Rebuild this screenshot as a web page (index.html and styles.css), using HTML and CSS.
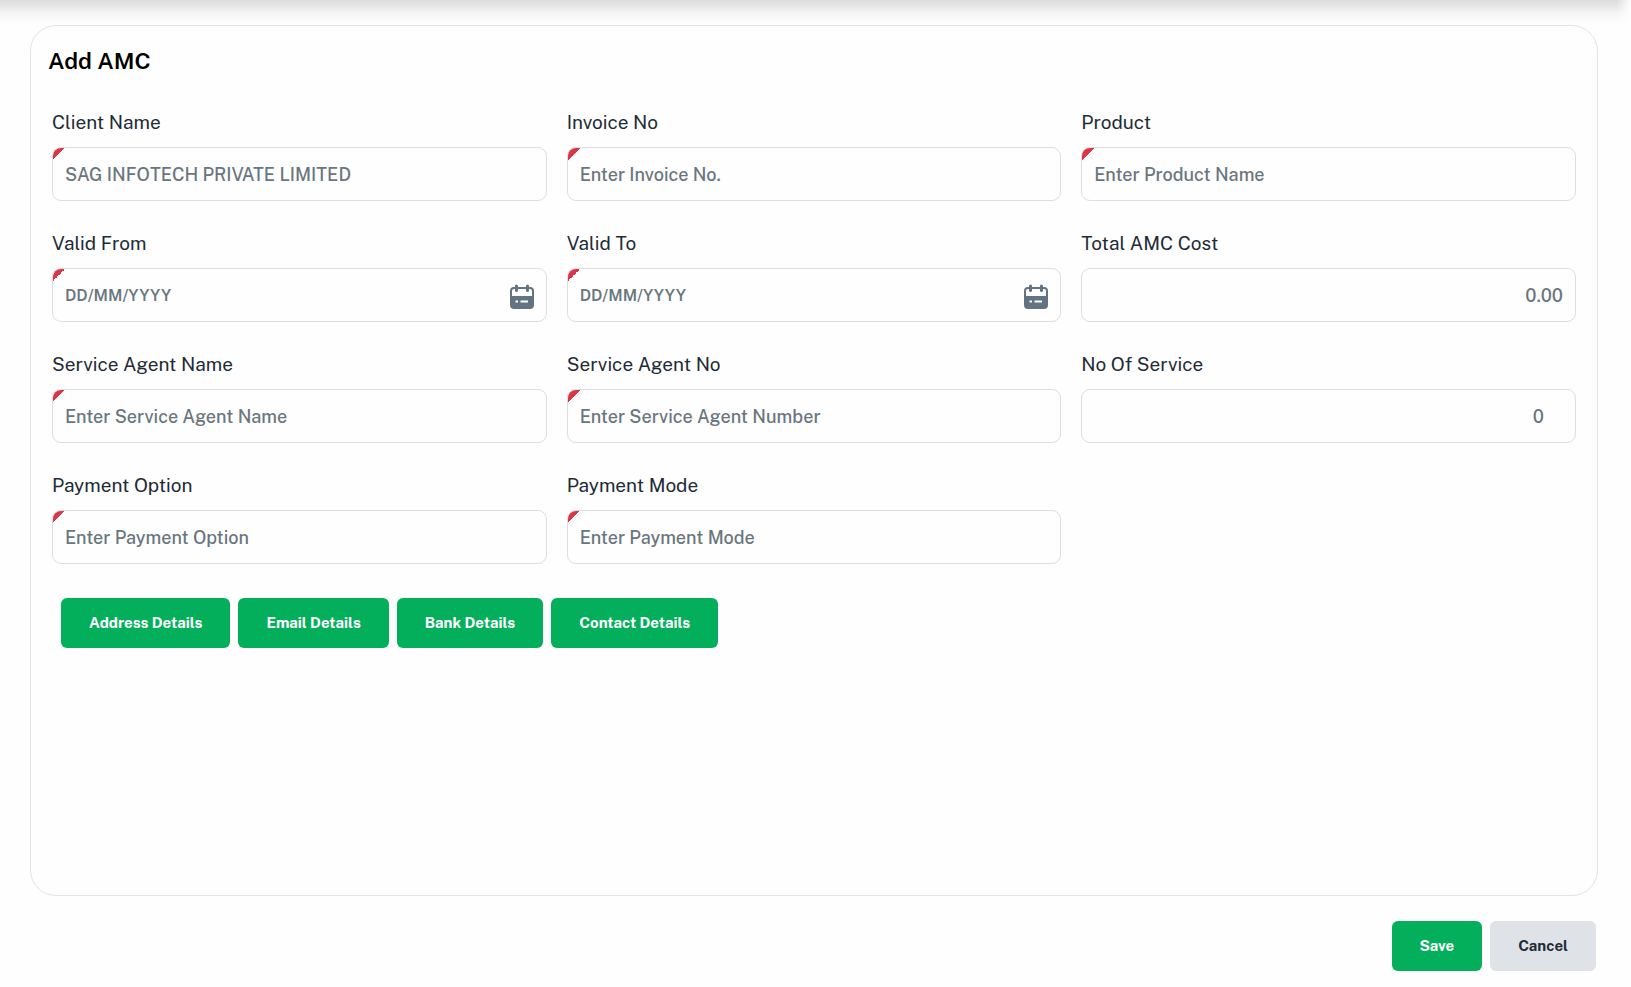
FILE: index.html
```html
<!DOCTYPE html>
<html lang="en">
<head>
<meta charset="utf-8">
<title>Add AMC</title>
<link rel="stylesheet" href="styles.css">
</head>
<body>
<svg class="sprite" aria-hidden="true">
  <symbol id="calendar" viewBox="0 0 24 26">
    <path fill-rule="evenodd" fill="currentColor" d="M4 3H20A4 4 0 0 1 24 7V21A4 4 0 0 1 20 25H4A4 4 0 0 1 0 21V7A4 4 0 0 1 4 3ZM4 5A2 2 0 0 0 2 7V12H22V7A2 2 0 0 0 20 5ZM5.500 16.500V18.500H8V16.500ZM10.500 16.500V18.500H18V16.500Z"/>
    <path fill="none" stroke="currentColor" stroke-width="3" stroke-linecap="round" d="M6.500 2V6.500M17.500 2V6.500"/>
  </symbol>
</svg>
<form class="page">
  <main class="card">
    <h1 class="title">Add AMC</h1>
    <div class="fields">
      <div class="field">
        <label class="label" for="client">Client Name</label>
        <div class="control required"><input class="input" id="client" type="text" value="SAG INFOTECH PRIVATE LIMITED"></div>
      </div>
      <div class="field">
        <label class="label" for="invoice">Invoice No</label>
        <div class="control required"><input class="input" id="invoice" type="text" placeholder="Enter Invoice No."></div>
      </div>
      <div class="field">
        <label class="label" for="product">Product</label>
        <div class="control required"><input class="input" id="product" type="text" placeholder="Enter Product Name"></div>
      </div>
      <div class="field">
        <label class="label" for="from">Valid From</label>
        <div class="control required">
          <input class="input date" id="from" type="text" placeholder="DD/MM/YYYY">
          <button class="picker" type="button" aria-label="Choose valid from date"><svg class="icon"><use href="#calendar"/></svg></button>
        </div>
      </div>
      <div class="field">
        <label class="label" for="to">Valid To</label>
        <div class="control required">
          <input class="input date" id="to" type="text" placeholder="DD/MM/YYYY">
          <button class="picker" type="button" aria-label="Choose valid to date"><svg class="icon"><use href="#calendar"/></svg></button>
        </div>
      </div>
      <div class="field">
        <label class="label" for="cost">Total AMC Cost</label>
        <div class="control"><input class="input amount" id="cost" type="text" placeholder="0.00"></div>
      </div>
      <div class="field">
        <label class="label" for="agent">Service Agent Name</label>
        <div class="control required"><input class="input" id="agent" type="text" placeholder="Enter Service Agent Name"></div>
      </div>
      <div class="field">
        <label class="label" for="agent-no">Service Agent No</label>
        <div class="control required"><input class="input" id="agent-no" type="text" placeholder="Enter Service Agent Number"></div>
      </div>
      <div class="field">
        <label class="label" for="services">No Of Service</label>
        <div class="control"><input class="input amount count" id="services" type="text" placeholder="0"></div>
      </div>
      <div class="field">
        <label class="label" for="option">Payment Option</label>
        <div class="control required"><input class="input" id="option" type="text" placeholder="Enter Payment Option"></div>
      </div>
      <div class="field">
        <label class="label" for="mode">Payment Mode</label>
        <div class="control required"><input class="input" id="mode" type="text" placeholder="Enter Payment Mode"></div>
      </div>
    </div>
    <div class="details">
      <button class="button" type="button">Address Details</button>
      <button class="button" type="button">Email Details</button>
      <button class="button" type="button">Bank Details</button>
      <button class="button" type="button">Contact Details</button>
    </div>
  </main>
  <footer class="actions">
    <button class="button" type="submit">Save</button>
    <button class="button cancel" type="button">Cancel</button>
  </footer>
</form>
</body>
</html>
```
FILE: styles.css
```css
* { box-sizing: border-box; }

body {
  margin: 0;
  background:
    linear-gradient(to left, #fefefe, transparent) top right / 14px 24px no-repeat,
    #fefefe linear-gradient(#dcdcdc, #e4e4e4 5px, #f5f5f5 13px, #fefefe 24px) top / 100% 24px no-repeat;
  color: #212b36;
  font-family: "Public Sans", Inter, "Liberation Sans", sans-serif;
}

.sprite { display: none; }

.page {
  display: flex;
  flex-direction: column;
  gap: 25px;
  min-height: 100vh;
  padding: 25px 33px 16px 30px;
}

.card {
  flex: 1;
  border: 1px solid #e2e3e5;
  border-radius: 26px;
  padding: 20px 21px;
  background: #fefefe;
}

.title {
  margin: 0 0 35px -4px;
  color: #000;
  font-size: 23px;
  font-weight: 600;
  line-height: 29px;
}

.fields {
  display: grid;
  grid-template-columns: repeat(3, minmax(0, 1fr));
  gap: 30px 20px;
}

.field {
  display: flex;
  flex-direction: column;
  gap: 12px;
}

.label {
  align-self: flex-start;
  font-size: 19px;
  line-height: 25px;
}

.control {
  position: relative;
  display: flex;
  align-items: center;
  height: 54px;
  border: 1px solid #dcdee0;
  border-radius: 9px;
  overflow: hidden;
}

.required::before {
  content: "";
  position: absolute;
  top: 0;
  left: 0;
  width: 12px;
  height: 12px;
  background: linear-gradient(135deg, #dc3545 50%, transparent 50%);
}

.input {
  flex: 1;
  min-width: 0;
  height: 100%;
  border: 0;
  padding: 0 12px;
  background: transparent;
  color: #69767e;
  font: 500 18px "Public Sans", Inter, "Liberation Sans", sans-serif;
  outline: 0;
}

.input::placeholder { color: #69767e; opacity: 1; }
.date { font-size: 16px; font-weight: 600; }
.amount { text-align: right; }
.count { padding-right: 31px; }

.picker {
  display: flex;
  border: 0;
  padding: 4px 12px 0;
  background: transparent;
  color: #637381;
}

.icon { width: 24px; height: 26px; }

.details {
  display: flex;
  gap: 8px;
  padding: 34px 9px 0;
}

.button {
  height: 50px;
  border: 0;
  border-radius: 6px;
  padding: 0 28px 2px;
  background: #04af5c;
  color: #fff;
  font: 700 15px "Public Sans", Inter, "Liberation Sans", sans-serif;
}

.cancel { background: #dfe3e8; color: #212b36; }

.actions {
  display: flex;
  justify-content: flex-end;
  gap: 8px;
  padding-right: 2px;
}
```
